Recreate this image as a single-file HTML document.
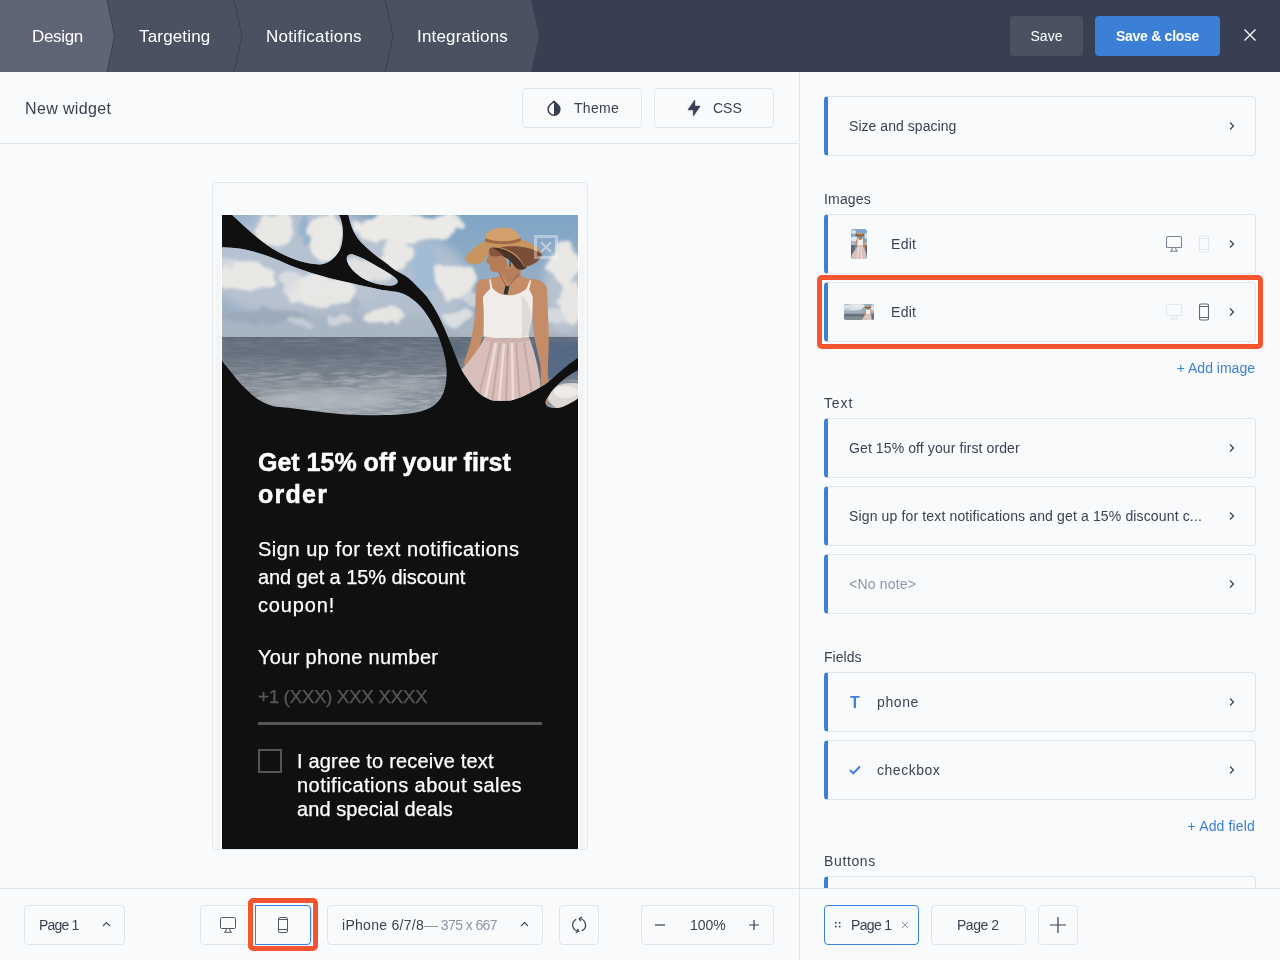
<!DOCTYPE html>
<html lang="en">
<head>
<meta charset="utf-8">
<title>Widget editor</title>
<style>
*{box-sizing:border-box;margin:0;padding:0}
html,body{width:1280px;height:960px;overflow:hidden;background:#f9fafc;font-family:"Liberation Sans",sans-serif;color:#3a4252;font-size:14px}
.abs{position:absolute}
#top{position:absolute;left:0;top:0;width:1280px;height:72px;background:#373f50}
#top svg{position:absolute;left:0;top:0}
.tab{position:absolute;top:1px;height:72px;line-height:72px;color:#fff;font-size:17px;white-space:nowrap}
.btn{position:absolute;border-radius:4px;color:#fff;text-align:center;font-size:15px}
#left{position:absolute;left:0;top:72px;width:799px;height:888px;background:#f9fafc}
#vline{position:absolute;left:799px;top:72px;width:1px;height:888px;background:#dfe5ef}
.hline{position:absolute;height:1px;background:#dfe5ef}
.obtn{position:absolute;border:1px solid #dfe5ef;border-radius:4px;background:#f9fafc;white-space:nowrap}
.card{position:absolute;left:824px;width:432px;height:60px;border:1px solid #dfe5ef;border-left:4px solid #3c7fd6;border-radius:4px;background:#f9fafc;line-height:58px;padding-left:21px;font-size:14px;white-space:nowrap}
.card .chev{position:absolute;right:20px;top:24px}
.lbl{position:absolute;left:824px;font-size:14px;line-height:16px;white-space:nowrap}
.link{position:absolute;color:#3c7fd6;font-size:14px;line-height:16px;white-space:nowrap;text-align:right;right:25px}
</style>
</head>
<body>
<div id="wrap" style="position:absolute;left:0;top:0;width:1280px;height:960px;will-change:transform">
<div id="top">
<svg width="560" height="72" viewBox="0 0 560 72">
<polygon points="0,0 531,0 539,36 531,72 0,72" fill="#4a5161"/>
<polygon points="0,0 107,0 114.500,36 107,72 0,72" fill="#5f6574"/>
<path d="M107,0L114.500,36L107,72M234,0L242,36L234,72M385,0L393,36L385,72" fill="none" stroke="#394152" stroke-width="1"/>
</svg>
<div class="tab" style="left:32px"><span id="tb0" style="letter-spacing:-0.324px">Design</span></div>
<div class="tab" style="left:139px"><span id="tb1" style="letter-spacing:0.17px">Targeting</span></div>
<div class="tab" style="left:266px"><span id="tb2" style="letter-spacing:0.249px">Notifications</span></div>
<div class="tab" style="left:417px"><span id="tb3" style="letter-spacing:0.178px">Integrations</span></div>
<div class="btn" style="left:1010px;top:16px;width:73px;height:40px;line-height:40px;background:#4a5161;font-size:14px"><span id="sv" style="letter-spacing:0.026px">Save</span></div>
<div class="btn" style="left:1095px;top:16px;width:125px;height:40px;line-height:40px;background:#3c7fd6;font-weight:bold;font-size:14px"><span id="svc" style="letter-spacing:-0.272px">Save &amp; close</span></div>
<svg style="left:1243px;top:28px" width="14" height="14" viewBox="0 0 14 14"><path d="M1.5 1.5L12.5 12.5M12.5 1.5L1.5 12.5" stroke="#fff" stroke-width="1.3" fill="none"/></svg>
</div>
<div id="left"></div>
<div id="vline"></div>
<div class="hline" style="left:0;top:143px;width:798px"></div>
<div class="hline" style="left:0;top:888px;width:1280px"></div>
<div class="abs" id="nw" style="letter-spacing:0.366px;left:25px;top:100px;font-size:16px;line-height:18px;white-space:nowrap">New widget</div>

<!-- sub header buttons -->
<div class="obtn" style="left:522px;top:88px;width:120px;height:40px"></div>
<svg class="abs" style="left:546px;top:99px" width="16" height="18" viewBox="0 0 16 18"><path d="M8,2.200L12.050,6.080A5.850,5.850 0 1 1 3.950,6.080Z" fill="none" stroke="#373f50" stroke-width="1.500" stroke-linejoin="round"/><path d="M8,2.200L12.050,6.080A5.850,5.850 0 0 1 8,16.150Z" fill="#373f50"/></svg>
<div class="abs" id="th" style="letter-spacing:0.28px;left:574px;top:99px;font-size:14px;line-height:18px">Theme</div>
<div class="obtn" style="left:654px;top:88px;width:120px;height:40px"></div>
<svg class="abs" style="left:686px;top:99px" width="16" height="18" viewBox="0 0 16 18"><path d="M8.600,1.200L8.900,1.200L8.900,7.100L14,7.100L14,7.600L7.600,16.800L7.200,16.800L7.200,10.900L2.100,10.900L2.100,10.400Z" fill="#373f50" stroke="#373f50" stroke-width="0.500" stroke-linejoin="round"/></svg>
<div class="abs" id="css" style="letter-spacing:0.002px;left:713px;top:99px;font-size:14px;line-height:18px">CSS</div>


<!-- preview frame -->
<div class="abs" style="left:212px;top:182px;width:376px;height:668px;border:1px solid #e3e8f0;border-radius:5px;background:#f9fafc"></div>
<div class="abs" style="left:216px;top:240px;width:5px;height:609px;background:linear-gradient(#f9fafc,#f5f5f5 25px)"></div><div class="abs" style="left:579px;top:240px;width:5px;height:609px;background:linear-gradient(#f9fafc,#f5f5f5 25px)"></div><div class="abs" style="left:221px;top:214px;width:358px;height:635px;background:#fdfdfe"></div>
<div class="abs" id="widget" style="left:222px;top:215px;width:356px;height:634px;background:#101010;overflow:hidden;color:#fff;font-family:'Liberation Sans',sans-serif;-webkit-text-stroke:0.250px currentColor">
<svg class="abs" style="left:0;top:0" width="356" height="210" viewBox="222 215 356 210">
<defs>
<linearGradient id="sky" x1="0" y1="0" x2="0" y2="1"><stop offset="0" stop-color="#7fa5c6"/><stop offset="0.55" stop-color="#95aec6"/><stop offset="1" stop-color="#a7b3bf"/></linearGradient>
<linearGradient id="sea" x1="0" y1="0" x2="0" y2="1"><stop offset="0" stop-color="#5f6b79"/><stop offset="0.35" stop-color="#717b87"/><stop offset="1" stop-color="#9aa1a8"/></linearGradient>
<filter id="b3" x="-20%" y="-20%" width="140%" height="140%"><feGaussianBlur stdDeviation="3"/></filter>
<filter id="b5" x="-20%" y="-20%" width="140%" height="140%"><feGaussianBlur stdDeviation="5"/></filter>
<filter id="cl" x="-10%" y="-10%" width="120%" height="120%"><feTurbulence type="fractalNoise" baseFrequency="0.05" numOctaves="3" seed="7" result="n"/><feDisplacementMap in="SourceGraphic" in2="n" scale="16" xChannelSelector="R" yChannelSelector="G"/><feGaussianBlur stdDeviation="1.400"/></filter>
<filter id="sn" x="0" y="0" width="100%" height="100%"><feTurbulence type="fractalNoise" baseFrequency="0.050 0.400" numOctaves="3" seed="4"/><feColorMatrix type="matrix" values="0 0 0 0 0.850  0 0 0 0 0.870  0 0 0 0 0.890  2.200 0 0 0 -0.800"/></filter>
<filter id="b1" x="-20%" y="-20%" width="140%" height="140%"><feGaussianBlur stdDeviation="0.7"/></filter>
<clipPath id="holes">
<path d="M232,215 C240,222 256,238 272.500,248.700 C288,258 305,264 319.400,264.400 C326,264.500 334,260 339.700,250.300 C343,243 343.500,232 342,223.700 C341,219 340,217 339,215 Z"/>
<path d="M346.700,258 C347,255 350,253.500 353.700,254.700 C360,256.500 367,260.500 374,264.400 C382,269 390,273.500 394.400,276.900 C397,279 398.500,281 397.500,282.500 C396,285.500 391,286 386.500,285.500 C380,285 372,283 366,280 C360,277 354,272 350.600,267.500 C348,264 346.500,261 346.700,258 Z"/>
<path d="M222,247.200 C228,247.500 235,248 241,248.700 C249,250 257,252.500 264.700,255 C272,257.500 280,261 288,264.400 C298,268.500 309,272 319.400,275.300 C330,278.500 340,281 350.600,283 C360,285 372,288 382,290 C386,290.500 388,290.800 390,291 C394,291.500 398,292 402.500,293.400 C407,295 411,298 415,301.200 C419,304.500 423,309 426,313.700 C429.500,318.500 432.500,324 435.300,329.400 C438,334.500 440,340 441.600,345 C443.300,350 444.700,355.500 445.500,360.600 C446.300,366 446.900,371 446.600,376.200 C446.300,380.500 445.800,385 444.700,388.700 C443.300,393.500 441.500,397.500 438.400,401.200 C435.500,404.500 432,407 427.500,409 C423,411 418.500,412.200 413.400,413 C406,414.200 398,414.800 390,415 C378,415.300 365,415 350.600,414.800 C340,414.300 330,413 319.400,411.700 C309,410.400 298,409 288,407.800 C283,407.300 277,407 272.500,406 C268.500,405 265,403.500 261.600,401.600 C257,399 253,396 249,392 C243,386.500 238,381 233.400,375 C229,369.500 225,364.500 222,361 Z"/>
<path d="M348.300,215 C349.500,220 351,226 353.700,231.600 C356.500,237.500 361,243 366.200,247.200 C371,251.500 376,256 382,260 C386,263 390.500,266.500 395,270 C399,272.500 403.500,274.500 407.500,277.300 C411,280 414.500,283.500 418,287.200 C422,291 426,295 429,299.700 C432.500,304.500 435.500,310 438.400,315.300 C441.300,321 444,327 446.200,332.500 C448.300,337.500 450.500,343 452.500,348 C454.500,353 456.500,358.500 458.700,363.700 C461,369 463.500,373.500 466.600,377.800 C469.500,382 472.500,386.500 476,390.300 C480,394.500 484.500,397.500 490,399.700 C492.500,400.500 495,401 497,400.800 C502,401 508,401 512.800,400 C518,398.500 523,396.500 528.400,393.700 C534,391 539,388 544,385 C549.500,381.500 555,376 559.700,371.900 C566,366.500 572,362 578,357.800 L578,215 Z"/>
<path d="M578,370.300 C574.500,372 571,374 567.500,376.600 C563,380 559,383.500 555,387.500 C552,390.500 550,393.500 548,396.900 C546.800,399 545.500,401 545.600,403 C545.800,405 547,406.500 548.700,407 C552,408.300 556,408.300 559.700,407.800 C563.500,407 567,405 570.600,403 C573.500,401.500 576,400 578,398.400 Z"/>
</clipPath>
</defs>
<g clip-path="url(#holes)">
<rect x="222" y="215" width="356" height="123" fill="url(#sky)"/>
<g id="clouds"><g filter="url(#b5)"><ellipse cx="300" cy="262" rx="100" ry="55" fill="#b9c4d1" opacity="0.9"/><ellipse cx="410" cy="285" rx="60" ry="50" fill="#b9c4d1" opacity="0.75"/><ellipse cx="330" cy="325" rx="120" ry="14" fill="#a9b6c4" opacity="0.9"/><ellipse cx="520" cy="328" rx="70" ry="9" fill="#aebac6" opacity="0.8"/><ellipse cx="565" cy="290" rx="22" ry="45" fill="#c3ccd6" opacity="0.7"/></g><g filter="url(#cl)"><ellipse cx="262" cy="316" rx="44" ry="7" fill="#9aa9ba" opacity="0.85"/><ellipse cx="330" cy="303" rx="30" ry="5" fill="#a3b0c0" opacity="0.7"/><ellipse cx="306" cy="228" rx="6" ry="14" fill="#8fb0cf" opacity="0.85"/><ellipse cx="246" cy="219" rx="12" ry="5" fill="#9db6cf" opacity="0.7"/><ellipse cx="425" cy="268" rx="13" ry="24" fill="#9dbad6" opacity="0.75"/><ellipse cx="274" cy="232" rx="19" ry="17" fill="#eceae6" opacity="0.95"/><ellipse cx="325" cy="238" rx="17" ry="24" fill="#eceae6" opacity="0.97"/><ellipse cx="372" cy="270" rx="26" ry="12" fill="#e4e4e2" opacity="0.95"/><ellipse cx="405" cy="228" rx="52" ry="15" fill="#eceae6" opacity="1"/><ellipse cx="445" cy="224" rx="20" ry="9" fill="#eceae6" opacity="0.95"/><ellipse cx="396" cy="256" rx="15" ry="15" fill="#eceae6" opacity="0.95"/><ellipse cx="248" cy="277" rx="27" ry="17" fill="#eceae6" opacity="0.95"/><ellipse cx="228" cy="262" rx="10" ry="8" fill="#d5dae0" opacity="0.8"/><ellipse cx="322" cy="291" rx="33" ry="17" fill="#eceae6" opacity="0.92"/><ellipse cx="290" cy="283" rx="12" ry="10" fill="#dfe1e3" opacity="0.85"/><ellipse cx="382" cy="316" rx="21" ry="8" fill="#eceae6" opacity="0.9"/><ellipse cx="340" cy="320" rx="16" ry="5" fill="#d9dce0" opacity="0.8"/><ellipse cx="300" cy="322" rx="14" ry="4" fill="#cfd5db" opacity="0.7"/><ellipse cx="454" cy="281" rx="20" ry="18" fill="#eceae6" opacity="0.95"/><ellipse cx="458" cy="317" rx="14" ry="7" fill="#e0e2e3" opacity="0.9"/><ellipse cx="470" cy="300" rx="8" ry="8" fill="#dcdfe2" opacity="0.7"/><ellipse cx="563" cy="262" rx="15" ry="22" fill="#eceae6" opacity="0.95"/><ellipse cx="571" cy="300" rx="12" ry="22" fill="#eceae6" opacity="0.9"/><ellipse cx="553" cy="318" rx="12" ry="8" fill="#d9dde1" opacity="0.85"/></g></g>
<rect x="222" y="337" width="356" height="90" fill="url(#sea)"/>
<g id="seafx"><rect x="222" y="338" width="356" height="90" filter="url(#sn)" opacity="0.140"/><rect x="222" y="372" width="356" height="56" filter="url(#sn)" opacity="0.280"/><g filter="url(#b3)"><ellipse cx="330" cy="400" rx="70" ry="10" fill="#b3b9bd" opacity="0.8"/><ellipse cx="280" cy="385" rx="50" ry="6" fill="#8d959d" opacity="0.6"/><ellipse cx="400" cy="385" rx="40" ry="8" fill="#a3aab0" opacity="0.6"/><ellipse cx="300" cy="352" rx="80" ry="6" fill="#5d6977" opacity="0.6"/><ellipse cx="556" cy="360" rx="44" ry="20" fill="#4d6483" opacity="0.75"/><ellipse cx="455" cy="350" rx="12" ry="8" fill="#556577" opacity="0.6"/></g><g filter="url(#b1)"><ellipse cx="572" cy="397" rx="24" ry="14" fill="#ddd8d3"/><ellipse cx="566" cy="392" rx="12" ry="6" fill="#eeeae6"/></g></g>
<g id="woman"><g filter="url(#b1)"><path d="M482.700,279 C478,280 476,284 476.300,288 C475.500,296 475.200,304 475.200,311 C474.500,320 473.500,328 472,334.500 C471,341 469.500,347 467.700,351.600 C466,357 464.500,361 463.500,364.400 L470,366 C472,363 473,361 474,358 C477,353 479,348 480.500,343 C482.500,337 483.700,331 483.700,326 L485,300 L489,282 Z" fill="#c48d68"/><path d="M530,280 C536,279 540,280 540.300,281 C545,283 546.500,286 546.700,289.700 C547.500,297 547.800,304 547.800,311 C548.500,322 548.800,333 548.800,343 C548.500,354 548,365 547.800,375 C548.500,379 548.800,382 548.800,385.700 C548.500,393 548,400 546.700,405 L541,404 C541,398 541.400,392 541.400,385.700 C541,378 540.700,371 540.300,364.400 C538,354 535.500,344 533.900,334.500 C533,329 532.800,323 532.800,317.400 L532,300 Z" fill="#c48d68"/><path d="M477.500,285 C479,280.500 485,279 490,278.600 L499,276 L497.500,266 L521,262 L520.500,276 L530,279 C536,278.600 542,280.500 546.500,287 L546,302 L477,302 Z" fill="#c48d68"/><path d="M499,270 L520,266 L520.500,276 L508,283 Z" fill="#ad7653" opacity="0.600"/><path d="M489.200,279.300 L490.600,279.200 L492.200,287.600 C496,293 502,295.300 508.500,295.300 C516,295.300 522,292.600 526.600,288.400 L529.800,280.200 L531.200,280.500 L529.200,289.500 C530.500,292 532,294.500 532.800,297.500 C533,304 532.300,311 531.800,317.400 C531,323 529.500,329 528.600,334.500 L528.600,338.500 L485.900,338.500 L483.700,334.500 C483.900,326 483.900,318 483.700,310 C483.400,305 483,301 483,297 C485,294 488,291 490.300,288.600 Z" fill="#f0ede8"/><path d="M522,296 C527,300 530,306 531,316 L529,334 L522,338 Z" fill="#d9d2d0" opacity="0.7"/><path d="M498,270 L507,288 L519,274" fill="none" stroke="#7a4d38" stroke-width="0.700"/><rect x="504.500" y="286" width="4" height="8.500" fill="#2c3438" transform="rotate(12 506.500 290)"/><path d="M485,336.500 C498,339.500 515,339.500 528.600,336.800 C531,342 532.500,347 533.900,351.600 C536,359 538,367 539.200,375 C540,381 540.300,385 540.300,392 L536,410 L470,410 L458,372 C460,369 461,369 462.400,368.700 C468,363 472,357 476.300,351.600 C480,346 483,341 485,336.500 Z" fill="#d8bfba"/><path d="M492,342 L478,400 M500,343 L492,402 M508,343 L506,402 M516,343 L520,402 M524,342 L532,395" stroke="#bfa5a0" stroke-width="2" fill="none" opacity="0.8"/><path d="M496,343 L485,400 M512,343 L513,402 M504,344 L499,402" stroke="#efe3e0" stroke-width="2.500" fill="none" opacity="0.8"/><path d="M485,336.500 C498,339.500 515,339.500 528.600,336.800 L529.500,340.500 C515,343.500 498,343.500 484,340.500 Z" fill="#cfb1ab"/><path d="M491,246 C500,242 518,243 526,250 C530,256 529,263 526,268 C522,271 517,270 514,266 C512,262 508,258 503,257 C498,256 494,252 491,246 Z" fill="#4b3226"/><path d="M489,248 C492,247 497,250 502,255 C506,258 508,262 507,266 C506,269 503,271 499,272 C495,273 491,271.500 490,269.500 C490.500,267 490,266 489,264.500 C487.500,263 486,262 486,261 C487,259 488.500,256 488.500,253 Z" fill="#b57c58"/><path d="M488.500,248 C493,247 498,250 503,255 C500,256 495,257 491,256 C489,254 488.500,251 488.500,248 Z" fill="#7a4c35" opacity="0.8"/><rect x="509.500" y="257" width="1.200" height="10" fill="#3a3f44"/><path d="M464.500,258.700 C470,250 480,243 487,240 C500,236 515,237 523,240 C532,243 541,249 542,254 C541,260 534,265.500 524,267 C521,259 508,246 490,247.500 C488,254 485,261 478.400,264 C473,265 467,263 464.500,258.700 Z" fill="#c8945f"/><path d="M524,267 C522,259 514,250 500,247.500 C512,245 530,246 542,254 C541,260 534,265.500 524,267 Z" fill="#7a5038"/><path d="M484.800,240 C484,235 487,232 491,230 C496,227.500 506,227 511,228.500 C516,230 519,234 520.500,239.500 C512,243 496,244 484.800,240 Z" fill="#d2a06b"/><path d="M485,238 C496,242.500 512,242 520.500,238 L521,241 C512,245 496,245.500 485,241.500 Z" fill="#a06b44"/></g></g>
</g>
</svg>
<div class="abs" style="left:312px;top:20px;width:24px;height:24px;border:3px solid rgba(255,255,255,0.380)"></div>
<svg class="abs" style="left:318px;top:26px" width="12" height="12" viewBox="0 0 12 12"><path d="M1.200 1.200L10.800 10.800M10.800 1.200L1.200 10.800" stroke="rgba(255,255,255,0.450)" stroke-width="2"/></svg>
<div class="abs" style="left:36px;top:231px;font-weight:bold;font-size:25px;line-height:32px;white-space:nowrap;-webkit-text-stroke:0.500px #fff"><span id="h1" style="letter-spacing:-0.001px">Get 15% off your first</span><br><span id="h2" style="letter-spacing:1.273px">order</span></div>
<div class="abs" style="left:36px;top:320px;font-size:20px;line-height:28px;white-space:nowrap"><span id="p1" style="letter-spacing:0.527px">Sign up for text notifications</span><br><span id="p2" style="letter-spacing:-0.083px">and get a 15% discount</span><br><span id="p3" style="letter-spacing:0.855px">coupon!</span></div>
<div class="abs" style="left:36px;top:428px;font-size:20px;line-height:28px;white-space:nowrap"><span id="l1" style="letter-spacing:0.315px">Your phone number</span></div>
<div class="abs" style="left:36px;top:468px;font-size:19px;line-height:28px;white-space:nowrap;color:#575757"><span id="ph" style="letter-spacing:-0.456px">+1 (XXX) XXX XXXX</span></div>
<div class="abs" style="left:36px;top:507px;width:284px;height:3px;background:#555"></div>
<div class="abs" style="left:36px;top:534px;width:24px;height:24px;border:2px solid #555"></div>
<div class="abs" style="left:75px;top:534px;font-size:20px;line-height:24px;white-space:nowrap"><span id="c1" style="letter-spacing:0.19px">I agree to receive text</span><br><span id="c2" style="letter-spacing:0.46px">notifications about sales</span><br><span id="c3" style="letter-spacing:0.071px">and special deals</span></div>
</div>
<!-- bottom bar left -->
<div class="obtn" style="left:24px;top:905px;width:101px;height:40px"></div>
<div class="abs" id="bp1" style="letter-spacing:-0.815px;left:39px;top:916px;font-size:14px;line-height:18px;white-space:nowrap">Page 1</div>
<svg class="abs" style="left:102px;top:921px" width="9" height="6" viewBox="0 0 9 6"><path d="M1 5L4.500 1.500L8 5" fill="none" stroke="#414959" stroke-width="1.100"/></svg>

<div class="obtn" style="left:200px;top:905px;width:112px;height:40px"></div>
<svg class="abs" style="left:219px;top:916px" width="18" height="18" viewBox="0 0 18 18"><rect x="1.500" y="1.500" width="15" height="11" rx="1" fill="none" stroke="#515968" stroke-width="1"/><path d="M7.500 12.500L6.500 16M10.500 12.500L11.500 16M5 16.300H13" fill="none" stroke="#515968" stroke-width="1"/></svg>
<div class="abs" style="left:248px;top:898px;width:70px;height:53px;border:5px solid #f4552f;border-radius:5px"></div>
<div class="abs" style="left:255px;top:905px;width:56px;height:40px;border:1px solid #3c7fd6;border-radius:0 4px 4px 0"></div>
<svg class="abs" style="left:277px;top:916px" width="12" height="18" viewBox="0 0 12 18"><rect x="1.500" y="1.500" width="9" height="15" rx="1.500" fill="none" stroke="#515968" stroke-width="1"/><path d="M1.500 3.500H10.500M1.500 13.500H10.500" stroke="#515968" stroke-width="1"/></svg>

<div class="obtn" style="left:327px;top:905px;width:216px;height:40px"></div>
<div class="abs" style="left:342px;top:916px;font-size:14px;line-height:18px;white-space:nowrap"><span id="ip1" style="letter-spacing:0.289px">iPhone 6/7/8</span><span id="ip2" style="letter-spacing:-0.589px;color:#8b95a7">— 375 x 667</span></div>
<svg class="abs" style="left:520px;top:921px" width="9" height="6" viewBox="0 0 9 6"><path d="M1 5L4.500 1.500L8 5" fill="none" stroke="#414959" stroke-width="1.100"/></svg>

<div class="obtn" style="left:559px;top:905px;width:40px;height:40px"></div>
<svg class="abs" style="left:570px;top:915px" width="18" height="20" viewBox="0 0 18 20"><path d="M5.800,4.500A6.300,6.300 0 0 0 8.600,16.250M12.200,15.600A6.300,6.300 0 0 0 9.400,3.750" fill="none" stroke="#373f50" stroke-width="1.200" stroke-linecap="round"/><path d="M7.600,14.300L8.900,16.250L6.200,17.500M11.700,2.400L9.200,3.750L10.400,5.700" fill="none" stroke="#373f50" stroke-width="1.200" stroke-linecap="round" stroke-linejoin="round"/></svg>

<div class="obtn" style="left:641px;top:905px;width:133px;height:40px"></div>
<svg class="abs" style="left:655px;top:924px" width="10" height="2" viewBox="0 0 10 2"><path d="M0 1H10" stroke="#373f50" stroke-width="1.200"/></svg>
<div class="abs" id="zm" style="letter-spacing:-0.037px;left:690px;top:916px;font-size:14px;line-height:18px">100%</div>
<svg class="abs" style="left:749px;top:920px" width="10" height="10" viewBox="0 0 10 10"><path d="M0 5H10M5 0V10" stroke="#373f50" stroke-width="1.200"/></svg>


<!-- right panel -->
<div class="card" style="top:96px"><span id="k1" style="letter-spacing:0.044px">Size and spacing</span><svg class="chev" width="6" height="10" viewBox="0 0 6 10"><path d="M1 1.500L4.500 5L1 8.500" fill="none" stroke="#373f50" stroke-width="1.200"/></svg></div>
<div class="lbl" style="top:191px"><span id="g1" style="letter-spacing:0.176px">Images</span></div>
<div class="card" style="top:214px;padding-left:63px"><span id="k2" style="letter-spacing:0.292px">Edit</span><svg class="chev" width="6" height="10" viewBox="0 0 6 10"><path d="M1 1.500L4.500 5L1 8.500" fill="none" stroke="#373f50" stroke-width="1.200"/></svg></div>
<div class="card" style="top:282px;padding-left:63px"><span id="k3" style="letter-spacing:0.292px">Edit</span><svg class="chev" width="6" height="10" viewBox="0 0 6 10"><path d="M1 1.500L4.500 5L1 8.500" fill="none" stroke="#373f50" stroke-width="1.200"/></svg></div>
<div class="abs" style="left:817px;top:275px;width:446px;height:74px;border:5px solid #f4552f;border-radius:5px"></div>
<svg class="abs" style="left:1165px;top:235px" width="18" height="18" viewBox="0 0 18 18"><rect x="1.500" y="1.500" width="15" height="11" rx="1" fill="none" stroke="#7b8798" stroke-width="1.100"/><path d="M7.500 12.500L6.500 16M10.500 12.500L11.500 16M5 16.300H13" fill="none" stroke="#7b8798" stroke-width="1.100"/></svg><svg class="abs" style="left:1198px;top:235px" width="12" height="18" viewBox="0 0 12 18"><rect x="1.500" y="1" width="9" height="16" rx="1.500" fill="none" stroke="#e3e7ee" stroke-width="1.100"/><path d="M1.500 3.500H10.500M1.500 14.500H10.500" stroke="#e3e7ee" stroke-width="1"/></svg>
<svg class="abs" style="left:1165px;top:303px" width="18" height="18" viewBox="0 0 18 18"><rect x="1.500" y="1.500" width="15" height="11" rx="1" fill="none" stroke="#e3e7ee" stroke-width="1.100"/><path d="M7.500 12.500L6.500 16M10.500 12.500L11.500 16M5 16.300H13" fill="none" stroke="#e3e7ee" stroke-width="1.100"/></svg><svg class="abs" style="left:1198px;top:303px" width="12" height="18" viewBox="0 0 12 18"><rect x="1.500" y="1" width="9" height="16" rx="1.500" fill="none" stroke="#5f6b7b" stroke-width="1.100"/><path d="M1.500 3.500H10.500M1.500 14.500H10.500" stroke="#5f6b7b" stroke-width="1"/></svg>
<svg class="abs" style="left:851px;top:229px" width="16" height="30" viewBox="0 0 16 30"><defs><clipPath id="t1c"><rect width="16" height="30" rx="2.500"/></clipPath><filter id="tb" x="-20%" y="-20%" width="140%" height="140%"><feGaussianBlur stdDeviation="0.450"/></filter></defs><g clip-path="url(#t1c)"><rect width="16" height="30" fill="#7fa6cb"/><g filter="url(#tb)"><ellipse cx="2.500" cy="3" rx="2.500" ry="2" fill="#dfe3e8"/><ellipse cx="3" cy="10" rx="3.500" ry="2.500" fill="#e4e6ea"/><ellipse cx="15" cy="7" rx="1.500" ry="3" fill="#d9dfe6"/><rect x="0" y="13" width="16" height="3.200" fill="#a9b8c8"/><rect x="0" y="16.200" width="16" height="14" fill="#596a7e"/><path d="M6.300,9.300L12,9.300L13.600,12L14.600,22L13.500,22L12.500,14L6,14L5,20L4,20L5,11.500Z" fill="#c38e6a"/><path d="M7.500,6L10.500,6L10.500,9.500L7.500,9.500Z" fill="#b07a58"/><path d="M6.600,9.600L7.500,9.600L8,11L10.500,11L11.300,9.600L12,9.600L12,16.800L6.600,16.800Z" fill="#f1efec"/><path d="M6.600,16.500L12,16.500L15,24L16,30L0,30L1,25L4,21Z" fill="#d9c0bb"/><path d="M8,18L6,30M10,18L10.500,30" stroke="#eee3e0" stroke-width="0.900" fill="none"/><ellipse cx="9" cy="5.900" rx="4.500" ry="1.500" fill="#8d5c3b"/><path d="M6.800,5.500C7,3.500 8,2.800 9,2.800C10,2.800 11,3.500 11.200,5.500Z" fill="#d19b63"/></g></g></svg>
<svg class="abs" style="left:844px;top:304px" width="30" height="16" viewBox="0 0 30 16"><defs><clipPath id="t2c"><rect width="30" height="16" rx="2.500"/></clipPath></defs><g clip-path="url(#t2c)"><rect width="30" height="16" fill="#8fadca"/><g filter="url(#tb)"><ellipse cx="9" cy="3.500" rx="10" ry="3.500" fill="#dcdfe3"/><ellipse cx="15" cy="2" rx="6" ry="2" fill="#e8e8e8"/><ellipse cx="3" cy="6" rx="4" ry="2" fill="#c8ced6"/><rect x="0" y="6.500" width="30" height="3.300" fill="#a4b0be"/><ellipse cx="28.500" cy="4" rx="1.500" ry="3" fill="#dde2e7"/><rect x="0" y="9.700" width="30" height="7" fill="#66727f"/><rect x="0" y="12.500" width="22" height="4" fill="#8a9299" opacity="0.800"/><path d="M21.500,5.500L26.500,5.500L27.500,8L27.800,14L26.800,14L26.300,9L21.800,9L20.500,13L19.800,13L20.800,7.500Z" fill="#c38e6a"/><path d="M23,3.500L25,3.500L25,5.800L23,5.800Z" fill="#a8714f"/><path d="M22,5.700L26.300,5.700L26.300,10.300L22,10.300Z" fill="#f1efec"/><path d="M22,10L26.300,10L28,16L18,16L19.500,13.500Z" fill="#dcc3be"/><ellipse cx="23.800" cy="3.300" rx="3.400" ry="1" fill="#8d5c3b"/><path d="M22.300,3C22.500,1.800 23.200,1.400 23.800,1.400C24.500,1.400 25.200,1.800 25.400,3Z" fill="#d19b63"/></g></g></svg>
<div class="link" style="top:360px"><span id="a1" style="letter-spacing:0.007px">+ Add image</span></div>
<div class="lbl" style="top:395px"><span id="g2" style="letter-spacing:0.871px">Text</span></div>
<div class="card" style="top:418px"><span id="k4" style="letter-spacing:0.103px">Get 15% off your first order</span><svg class="chev" width="6" height="10" viewBox="0 0 6 10"><path d="M1 1.500L4.500 5L1 8.500" fill="none" stroke="#373f50" stroke-width="1.200"/></svg></div>
<div class="card" style="top:486px"><span id="k5" style="letter-spacing:0.141px">Sign up for text notifications and get a 15% discount c...</span><svg class="chev" width="6" height="10" viewBox="0 0 6 10"><path d="M1 1.500L4.500 5L1 8.500" fill="none" stroke="#373f50" stroke-width="1.200"/></svg></div>
<div class="card" style="top:554px;color:#8b95a7"><span id="k6" style="letter-spacing:0.201px">&lt;No note&gt;</span><svg class="chev" width="6" height="10" viewBox="0 0 6 10"><path d="M1 1.500L4.500 5L1 8.500" fill="none" stroke="#373f50" stroke-width="1.200"/></svg></div>
<div class="lbl" style="top:649px"><span id="g3" style="letter-spacing:0.028px">Fields</span></div>
<div class="card" style="top:672px;padding-left:49px"><span id="k7" style="letter-spacing:0.591px">phone</span><svg class="chev" width="6" height="10" viewBox="0 0 6 10"><path d="M1 1.500L4.500 5L1 8.500" fill="none" stroke="#373f50" stroke-width="1.200"/></svg><span class="abs" style="left:22px;top:1px;color:#3c7fd6;font-size:16px;font-weight:bold">T</span></div>
<div class="card" style="top:740px;padding-left:49px"><span id="k8" style="letter-spacing:0.521px">checkbox</span><svg class="chev" width="6" height="10" viewBox="0 0 6 10"><path d="M1 1.500L4.500 5L1 8.500" fill="none" stroke="#373f50" stroke-width="1.200"/></svg><svg class="abs" style="left:21px;top:24px" width="12" height="10" viewBox="0 0 12 10"><path d="M1 5L4.300 8.300L11 1.500" fill="none" stroke="#3c7fd6" stroke-width="2"/></svg></div>
<div class="link" style="top:818px"><span id="a2" style="letter-spacing:0.152px">+ Add field</span></div>
<div class="lbl" style="top:853px"><span id="g4" style="letter-spacing:0.636px">Buttons</span></div>
<div class="card" style="top:876px;height:20px"></div>
<div class="abs" style="left:800px;top:888px;width:480px;height:72px;background:#f9fafc;border-top:1px solid #dfe5ef"></div>
<!-- bottom bar right -->
<div class="obtn" style="left:824px;top:905px;width:95px;height:40px;border-color:#3c7fd6"></div>
<svg class="abs" style="left:835px;top:922px" width="6" height="6" viewBox="0 0 6 6"><rect x="0" y="0" width="1.600" height="1.600" fill="#373f50"/><rect x="3.800" y="0" width="1.600" height="1.600" fill="#373f50"/><rect x="0" y="3.800" width="1.600" height="1.600" fill="#373f50"/><rect x="3.800" y="3.800" width="1.600" height="1.600" fill="#373f50"/></svg>
<div class="abs" id="tp1" style="letter-spacing:-0.675px;left:851px;top:916px;font-size:14px;line-height:18px;white-space:nowrap">Page 1</div>
<svg class="abs" style="left:901px;top:921px" width="8" height="8" viewBox="0 0 8 8"><path d="M1 1L7 7M7 1L1 7" stroke="#8b95a7" stroke-width="1"/></svg>
<div class="obtn" style="left:931px;top:905px;width:95px;height:40px"></div>
<div class="abs" id="tp2" style="letter-spacing:-0.475px;left:957px;top:916px;font-size:14px;line-height:18px;white-space:nowrap">Page 2</div>
<div class="obtn" style="left:1038px;top:905px;width:40px;height:40px"></div>
<svg class="abs" style="left:1050px;top:917px" width="16" height="16" viewBox="0 0 16 16"><path d="M0 8H16M8 0V16" stroke="#373f50" stroke-width="1.200"/></svg>
</div>
</body>
</html>
